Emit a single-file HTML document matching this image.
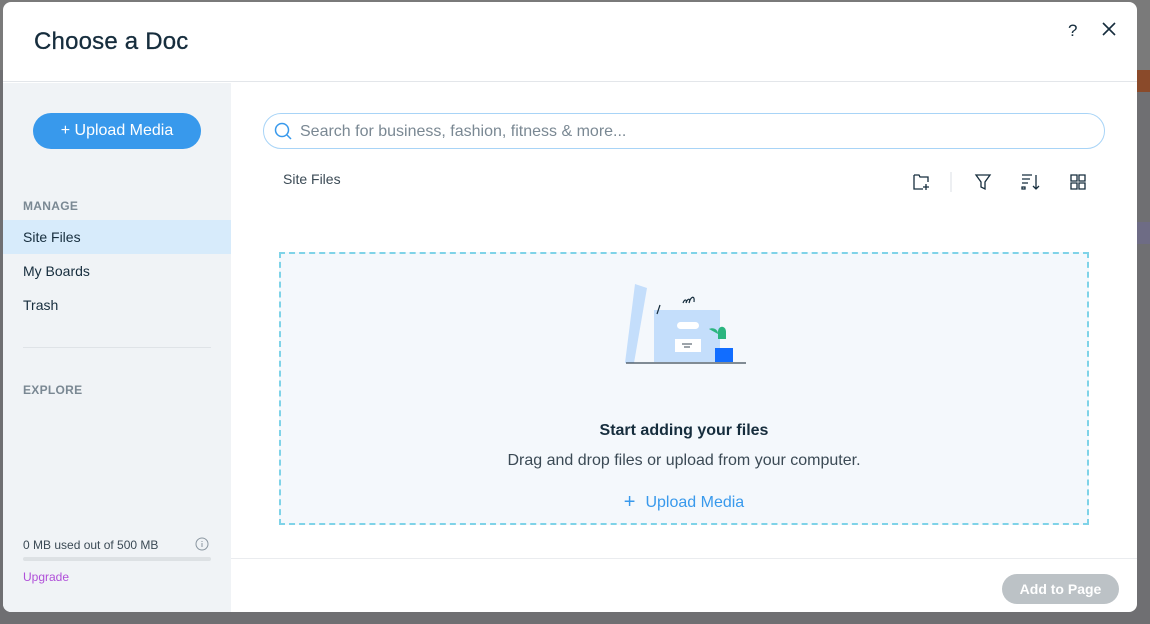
<!DOCTYPE html>
<html><head><meta charset="utf-8"><style>
*{box-sizing:border-box;margin:0;padding:0}
body{width:1150px;height:624px;overflow:hidden;background:#6f6f72;font-family:"Liberation Sans",sans-serif;position:relative}
.bgtop{position:absolute;left:0;top:0;width:1150px;height:70px;background:#7a7a7a}
.bgside{position:absolute;left:1137px;top:70px;width:13px;height:22px;background:#8a4a2a}
.bgside2{position:absolute;left:1137px;top:222px;width:13px;height:22px;background:#6e6c85}
.modal{position:absolute;left:3px;top:2px;width:1134px;height:610px;background:#fff;border-radius:8px;overflow:hidden}
.hdr{height:80px;border-bottom:1px solid #e3e6ea;position:relative}
.hdr h1{position:absolute;left:31px;top:26px;font-size:24px;font-weight:normal;color:#162d3d;letter-spacing:0.2px;-webkit-text-stroke:0.3px #162d3d}
.q{position:absolute;left:1065px;top:19px;font-size:17px;color:#162d3d}
.x{position:absolute;left:1099px;top:20px}
.side{position:absolute;left:0;top:81px;width:228px;height:529px;background:#f0f3f6}
.up{position:absolute;left:30px;top:30px;width:168px;height:36px;border-radius:18px;background:#3899ec;color:#fff;font-size:16px;text-align:center;line-height:36px}
.lbl{position:absolute;left:20px;font-size:12px;font-weight:bold;color:#7a8893;letter-spacing:.3px}
.item{position:absolute;left:0;width:228px;height:34px;line-height:34px;padding-left:20px;font-size:14px;color:#162d3d}
.main{position:absolute;left:228px;top:81px;width:906px;height:529px}
.search{position:absolute;left:32px;top:30px;width:842px;height:36px;border:1px solid #a8d4f7;border-radius:18px}
.search span{position:absolute;left:36px;top:9px;font-size:16px;color:#7a8893}
.drop{position:absolute;left:48px;top:169px;width:810px;height:273px;border:2px dashed #7fd3e8;background:#f4f8fc;text-align:center}
.foot{position:absolute;left:0;top:475px;width:906px;height:54px;border-top:1px solid #eaecef}
.add{position:absolute;left:771px;top:15px;width:117px;height:30px;border-radius:15px;background:#bcc2c6;color:#fff;font-size:14px;line-height:30px;text-align:center;font-weight:bold}
</style></head><body>
<div class="bgtop"></div><div class="bgside"></div><div class="bgside2"></div>
<div class="modal">
<div class="hdr"><h1>Choose a Doc</h1><div class="q">?</div>
<svg class="x" width="14" height="14" viewBox="0 0 14 14"><path d="M1 1L13 13M13 1L1 13" stroke="#162d3d" stroke-width="1.6"/></svg></div>
<div class="side">
<div class="up">+ Upload Media</div>
<div class="lbl" style="top:116px">MANAGE</div>
<div class="item" style="top:137px;background:#d7ebfb">Site Files</div>
<div class="item" style="top:171px">My Boards</div>
<div class="item" style="top:205px">Trash</div>
<div style="position:absolute;left:20px;top:264px;width:188px;height:1px;background:#dfe3e7"></div>
<div class="lbl" style="top:300px">EXPLORE</div>
<div style="position:absolute;left:20px;top:455px;font-size:12px;color:#3b4a55">0 MB used out of 500 MB</div>
<svg style="position:absolute;left:192px;top:454px" width="14" height="14" viewBox="0 0 14 14"><circle cx="7" cy="7" r="6" fill="none" stroke="#8a96a0"/><path d="M7 6v4M7 4v1" stroke="#8a96a0"/></svg>
<div style="position:absolute;left:20px;top:474px;width:188px;height:4px;border-radius:2px;background:#dde1e4"></div>
<div style="position:absolute;left:20px;top:487px;font-size:12px;color:#b04fd9">Upgrade</div>
</div>
<div class="main">
<div class="search"><svg style="position:absolute;left:10px;top:8px" width="18" height="18" viewBox="0 0 18 18"><circle cx="8" cy="8" r="6.5" fill="none" stroke="#3899ec" stroke-width="1.5"/><path d="M13 13l4 4" stroke="#3899ec" stroke-width="1.5"/></svg><span>Search for business, fashion, fitness &amp; more...</span></div>
<div style="position:absolute;left:52px;top:88px;font-size:14px;color:#3b4a55">Site Files</div>
<svg style="position:absolute;left:680px;top:89px" width="180" height="20" viewBox="0 0 180 20" fill="none" stroke="#162d3d" stroke-width="1.3">
<path d="M3 3h5l1 2h8v5M3 3v14h9M15 12v6M12 15h6"/>
<path d="M40 0v20" stroke="#e3e6ea"/>
<path d="M65 3h14l-5 7v7l-4-2v-5z"/>
<path d="M111 3h10M111 7h8M111 11h6M111 15h3v2h-3zM125 3v14M122 14l3 3 3-3"/>
<path d="M160 3h6v6h-6zM168 3h6v6h-6zM160 11h6v6h-6zM168 11h6v6h-6z"/>
</svg>
<div class="drop">
<svg style="position:absolute;left:321px;top:18px" width="150" height="100" viewBox="600 270 150 100">
<path d="M633 282l12 4-13 75h-9z" fill="#c4defb"/>
<rect x="652" y="308" width="66" height="52" fill="#c4defb"/>
<rect x="675" y="320" width="22" height="7" rx="3.5" fill="#fff"/>
<rect x="673" y="337" width="26" height="13" fill="#fff"/>
<path d="M680 342h10M682 345h6" stroke="#3b4a55"/>
<path d="M655 312l3-9" stroke="#162d3d" stroke-width="1.2"/>
<path d="M681 301c2-5 4-3 3 0c2-6 5-4 3 0c2-7 6-8 5-1" fill="none" stroke="#162d3d" stroke-width="1.2"/>
<path d="M716 330c0-7 8-7 8 0v7h-8z" fill="#2bb57f"/>
<path d="M707 327c4-2 9 0 9 5" fill="#2bb57f"/>
<rect x="713" y="346" width="18" height="14" fill="#116dff"/>
<path d="M624 361h120" stroke="#3b4a55" stroke-width="1.2"/>
</svg>
<div style="position:absolute;left:0;width:100%;top:168px;font-size:16px;font-weight:bold;color:#162d3d">Start adding your files</div>
<div style="position:absolute;left:0;width:100%;top:198px;font-size:16px;color:#3b4a55">Drag and drop files or upload from your computer.</div>
<div style="position:absolute;left:0;width:100%;top:237px;font-size:16px;color:#3899ec"><span style="font-size:20px;vertical-align:-1px;margin-right:10px">+</span>Upload Media</div>
</div>
<div class="foot"><div class="add">Add to Page</div></div>
</div>
</div>
</body></html>
